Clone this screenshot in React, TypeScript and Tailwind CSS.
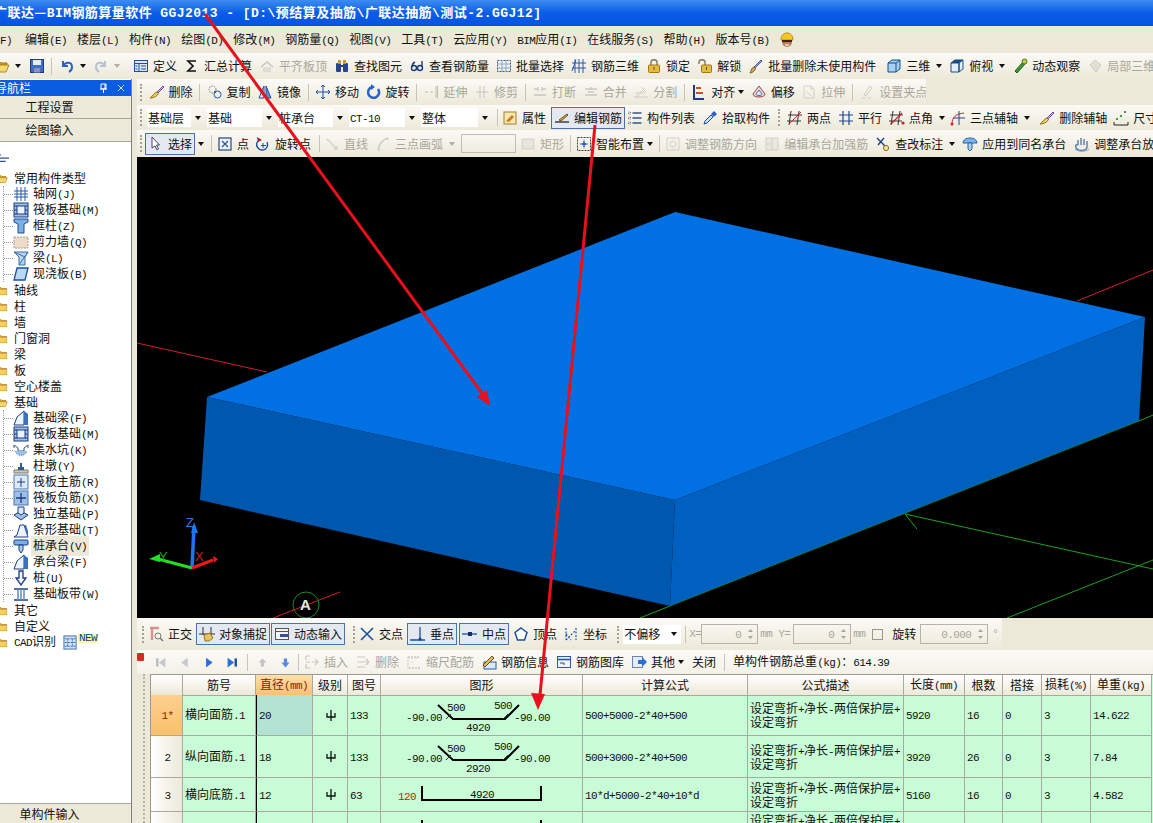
import type { ReactNode } from "react";
import clsx from "clsx";

const latin = "font-['Liberation_Mono',monospace] text-[11px] tracking-[-0.6px]";

// latin runs are narrower than the cjk font's own, so split them out
function T({ s }: { s: string }) {
  const parts = s.split(/([\x00-\x7f]+)/).filter(Boolean);
  return (
    <span className="whitespace-nowrap">
      {parts.map((p, i) =>
        /^[\x00-\x7f]/.test(p) ? (
          <span key={i} className={latin}>
            {p}
          </span>
        ) : (
          <span key={i}>{p}</span>
        )
      )}
    </span>
  );
}

const b = "#2a5aa8";
const icons: Record<string, ReactNode> = {
  folder: (<><path d="M1 4h5l1 1h7v9H1z" fill="#d9a520" stroke="#9a7410" /><path d="M1 7h13v7H1z" fill="#f4cf62" /></>),
  folderOpen: (<><path d="M1 4h5l1 1h6v2H4l-3 7z" fill="#d9a520" stroke="#9a7410" /><path d="M4 7h11l-3 7H1z" fill="#f6d870" stroke="#b08a20" /></>),
  save: (<><rect x="1.5" y="1.5" width="13" height="13" fill="#3f6fc0" stroke="#1c3c80" /><rect x="4" y="2" width="8" height="5" fill="#e4ecfa" /><rect x="5" y="10" width="6" height="4.5" fill="#8a93b8" /></>),
  undo: (<><path d="M4 3v5h5" stroke="#2a62c8" strokeWidth="2" /><path d="M4 8c3-5 9-4 9 1 0 2-1 4-3 5" stroke="#2a62c8" strokeWidth="2" /></>),
  redo: (<><path d="M12 3v5H7" stroke="#b8c4d4" strokeWidth="2" /><path d="M12 8C9 3 3 4 3 9c0 2 1 4 3 5" stroke="#b8c4d4" strokeWidth="2" /></>),
  define: (<><rect x="1.5" y="2.5" width="13" height="11" fill="#dbe8f8" stroke="#1d4f9c" /><path d="M1.5 5.5h13M6 5.5v8M8 8h5M8 11h5M2.5 8h2M2.5 11h2" stroke="#1d4f9c" /></>),
  sigma: <path d="M12 3H4l5 5-5 5h8" stroke="#111" strokeWidth="1.7" />,
  flat: (<><path d="M2 9l6-5 6 5" stroke="#b5b5ad" strokeWidth="1.5" /><path d="M4 9h8v5H4z" fill="#d8d8d0" /></>),
  binoc: (<><rect x="2" y="5" width="5" height="9" rx="1" fill="#25468c" /><rect x="9" y="5" width="5" height="9" rx="1" fill="#25468c" /><rect x="4" y="2" width="3" height="4" fill="#c99a28" /><rect x="9" y="2" width="3" height="4" fill="#c99a28" /><path d="M7 8h2" stroke="#25468c" strokeWidth="2" /></>),
  look: (<><circle cx="5" cy="10" r="2.5" stroke="#1c3c80" strokeWidth="1.4" /><circle cx="11" cy="10" r="2.5" stroke="#1c3c80" strokeWidth="1.4" /><path d="M3 9c0-3 1-4 3-5M13 9V3" stroke="#1c3c80" strokeWidth="1.4" /></>),
  batch: (<><path d="M1.5 2.5h13v11h-13z" strokeDasharray="2 1" stroke="#33558c" /><path d="M6 2v12M10 2v12M2 6h12M2 10h12" stroke="#8aa6cc" /></>),
  rebar3d: <path d="M1 5h14M1 10h14M4 1v14M8 1v14M12 1v14M1 13l4-11" stroke={b} />,
  lock: (<><path d="M5 7V4c0-3 6-3 6 0v3" stroke="#807860" strokeWidth="1.4" /><rect x="2.5" y="7" width="11" height="7.5" rx="1" fill="#e6b944" stroke="#a07810" /><path d="M8 9v3" stroke="#6a4f08" /></>),
  unlock: (<><path d="M2 6V4c0-3 6-3 6 0v3" stroke="#807860" strokeWidth="1.4" /><rect x="4.5" y="7" width="10" height="7.5" rx="1" fill="#e6b944" stroke="#a07810" /><path d="M9.5 9v3" stroke="#6a4f08" /></>),
  brush: (<><path d="M6 9l7-7 1 1-7 7z" fill="#9aa6e0" stroke="#5058a0" /><path d="M6 9l1.5 1.5C7 13 4 15 2 15c1-1 1-5 4-6z" fill="#d0a860" stroke="#806020" /></>),
  cube: (<><path d="M2 5l4-3h8v9l-4 3H2z" fill="#a9cff0" stroke="#13508c" /><path d="M2 5h8v9M10 5l4-3" stroke="#13508c" /></>),
  cubeTop: (<><path d="M2 5l4-3h8L10 5H2z" fill="#1f4f8a" stroke="#13406c" /><path d="M2 5h8v9H2zM10 5l4-3v9l-4 3z" fill="#e4eef8" stroke="#13508c" /></>),
  orbit: (<><path d="M3 13l8-9 2 2-8 9z" fill="#3c9a30" stroke="#1d5a18" /><circle cx="12.5" cy="3.5" r="2.5" fill="#b4d048" stroke="#587018" /></>),
  partial: <path d="M3 7l5-5 6 5-5 7z" fill="#d8d8d0" stroke="#c0c0b8" />,
  erase: (<><path d="M8 8l6-6 1 1-6 6z" fill="#d8b8e8" stroke="#7050a0" /><path d="M8 8l1.5 1.5C8 13 3 14 1 14c2-1 4-5 7-6z" fill="#f0d060" stroke="#907010" /></>),
  copy: (<><circle cx="5.5" cy="5.5" r="3.5" strokeDasharray="1.5 1" stroke="#777" /><circle cx="10.5" cy="10.5" r="3.5" stroke="#1d5fa8" /><path d="M7 7l2 2" stroke="#1d5fa8" /></>),
  mirror: (<><path d="M7 2L2 14h5z" fill="#dbe8f8" stroke="#1d4f9c" /><path d="M9 2l5 12H9z" fill="#5f94d0" stroke="#1d4f9c" /></>),
  move: <path d="M8 1v14M1 8h14M6 3l2-2 2 2M6 13l2 2 2-2M3 6L1 8l2 2M13 6l2 2-2 2" stroke="#1d4f9c" />,
  rotate: (<><path d="M12 5a5.5 5.5 0 1 1-6-2" stroke="#2a62c8" strokeWidth="2.6" /><path d="M5 0v6l4-3z" fill="#2a62c8" /></>),
  extend: <path d="M1 8h3M6 8h3M12 2v12M13.5 2v12" stroke="#a8a8a0" />,
  trim: <path d="M2 8h12M6 2v12M10 2v12" stroke="#b4b4ac" />,
  cut: <path d="M2 5h4M10 5h4M2 11h12M6 3v4M10 3v4" stroke="#b8b8b0" strokeWidth="1.4" />,
  merge: <path d="M2 5h12M2 11h12M5 8h6M8 3v3" stroke="#b8b8b0" strokeWidth="1.4" />,
  split: <path d="M1 13h14M3 13l9-9M8 3l5 5M2 9h10" stroke="#c0c0b8" />,
  align: (<><path d="M3 1v14h10" stroke="#1d3d80" strokeWidth="2" /><path d="M5 4h5M5 9h7" stroke="#c85020" strokeWidth="2" /></>),
  offset: (<><path d="M8 2l6 8c0 4-12 4-12 0z" fill="#f0d8d8" stroke="#a04050" /><path d="M8 6l3 4c0 2-6 2-6 0z" fill="#dde8f4" stroke="#5070a0" /></>),
  stretch: <path d="M3 2h7l3 3v9H3zM10 2v3h3M6 8l4 4" stroke="#c4c4bc" />,
  grip: <path d="M3 14h3M9 14h3M5 11l6-9 2 2-6 8z" stroke="#c0c0b8" />,
  attr: (<><rect x="2" y="2" width="12" height="12" fill="#f6e8b0" stroke="#a08030" /><path d="M4 11l6-6 2 2-5 5z" fill="#d07820" /></>),
  edit: (<><path d="M1 12h14" stroke="#222" strokeWidth="1.3" /><path d="M5 10l8-6 1 1-7 6z" fill="#e0b040" stroke="#705010" /></>),
  list: (<><path d="M5.5 3h9M5.5 8h9M5.5 13h9" stroke="#33558c" strokeWidth="1.5" /><path d="M1.5 2h2v2h-2zM1.5 7h2v2h-2zM1.5 12h2v2h-2z" stroke="#707070" strokeDasharray="1 1" /></>),
  pick: (<><path d="M2 14l1-3 6-6 2 2-6 6z" fill="#cfe0f4" stroke="#1d4f9c" /><path d="M9 4l3-3 3 3-3 3z" fill="#2a62c8" /></>),
  two: (<><path d="M4 1l-2 14M12 1l-2 14M1 5h14M0 11h14" stroke="#333" /><path d="M2 14L14 2" stroke="#c03020" /></>),
  parallel: <path d="M5 1v14M11 1v14M1 5h14M1 11h14" stroke="#20488c" strokeWidth="1.2" />,
  angle: (<><path d="M4 1l-2 14M11 1L9 15M1 5h13M0 11h13" stroke="#333" /><path d="M2 14L13 3" stroke="#d02030" strokeWidth="1.3" /><circle cx="14" cy="13" r="1.6" fill="#d02030" /></>),
  arcAxis: (<><path d="M2 14C2 7 6 4 14 3" stroke="#d02030" /><path d="M9 1v14M3 8h12" stroke="#20488c" /><circle cx="2" cy="14" r="1.5" fill="#d02030" /></>),
  dim: (<><path d="M1 15h14M1 12v3M15 12v3" stroke="#222" /><path d="M3 9h2M7 6h2M11 2h2" stroke="#40a040" strokeWidth="2" /></>),
  cursor: <path d="M4 1v11l3-2 2 4 1.5-1-2-4h3z" fill="#fff" stroke="#446" />,
  point: (<><rect x="2" y="2" width="12" height="12" fill="#eef2fa" stroke="#33558c" strokeWidth="1.3" /><path d="M5 5l6 6M11 5l-6 6" stroke="#33558c" strokeWidth="1.3" /></>),
  rotPoint: (<><path d="M12 6a5.5 5.5 0 1 1-8-2" stroke="#1d4f9c" strokeWidth="1.4" /><path d="M2 1l1 5 4-2z" fill="#a02030" /><path d="M8 7v5M6 9.5h5" stroke="#1d4f9c" /></>),
  line: <path d="M3 3l10 10M13 13h-3M13 13v-3" stroke="#c0c0b8" strokeWidth="1.3" />,
  arc3: <path d="M3 14C4 8 8 3 13 2M3 14h2M13 2v2" stroke="#c0c0b8" strokeWidth="1.6" />,
  rect: <rect x="2" y="3" width="12" height="10" fill="#e0e0d8" stroke="#c8c8c0" />,
  smart: (<><rect x="1.5" y="1.5" width="13" height="13" strokeDasharray="2 1" stroke="#444" /><path d="M8 3l1 4 4 1-4 1-1 4-1-4-4-1 4-1z" fill="#2a62c8" /></>),
  adjDir: (<><rect x="2" y="2" width="12" height="12" stroke="#c4c4bc" /><circle cx="8" cy="8" r="3" stroke="#c4c4bc" /></>),
  editCap: (<><rect x="2" y="2" width="12" height="12" fill="#e4e4dc" stroke="#c4c4bc" /><path d="M8 2v12M2 8h6" stroke="#c4c4bc" /></>),
  label: (<><path d="M2 2l10 10M9 2L3 9" stroke="#1d3d80" strokeWidth="1.4" /><circle cx="11" cy="12" r="2.6" fill="#f0e0a0" stroke="#907020" /></>),
  apply: (<><path d="M1 7c0-3 3-5 7-5s7 2 7 5z" fill="#7ab4ea" stroke="#2a62a8" /><path d="M6 7h4v6l-2 2-2-2z" fill="#a9cff0" stroke="#2a62a8" /></>),
  hand: (<><path d="M4 9V4M7 9V2M10 9V3M13 9V5M4 9c-3-1-3 2-1 4 2 2 8 2 10-1V8" stroke="#5070a0" strokeWidth="1.3" /><path d="M1 13c3 3 11 3 14 0" stroke="#7aa0d8" /></>),
  ortho: (<><path d="M2 2h9M4 2v12" stroke="#d89090" strokeWidth="2.4" /><circle cx="10" cy="10" r="3" stroke="#777" /><path d="M12 12l3 3" stroke="#777" strokeWidth="1.4" /></>),
  snap: (<><path d="M4 1v8M12 1v8M0 8h16" stroke="#333" /><path d="M5 9l6-2 3 5-4 3H6z" fill="#e8c460" stroke="#987810" /></>),
  input: (<><rect x="1.5" y="2.5" width="13" height="11" fill="#f4f4f0" stroke="#555" /><path d="M2 5.5h12" stroke="#555" /><path d="M6 9.5h8" stroke="#33558c" strokeWidth="3" /></>),
  cross: <path d="M2 2l12 12M14 2L2 14" stroke="#1d4f9c" strokeWidth="1.6" />,
  perp: (<><path d="M0 14h15M10 1v13" stroke="#1d4f9c" strokeWidth="1.3" /><circle cx="10" cy="13" r="1.5" fill="#1d3d80" /></>),
  mid: (<><path d="M0 8h15" stroke="#1d4f9c" strokeWidth="1.3" /><rect x="6" y="6" width="4" height="4" fill="#14306c" /></>),
  vertex: <path d="M8 2l6 4.5-2.5 7.5h-7L2 6.5z" fill="#fff" stroke="#1d4f9c" strokeWidth="1.5" />,
  coord: <path d="M3 2v12M13 2v12M3 14l10-10M3 8l5 6" stroke="#2a62a8" strokeDasharray="2 1.5" strokeWidth="1.3" />,
  first: (<><path d="M4 3v10" stroke="#b8bcc4" strokeWidth="3" /><path d="M14 2v12L6 8z" fill="#c4c8d0" /></>),
  prev: <path d="M12 2v12L4 8z" fill="#c4c8d0" />,
  next: <path d="M5 2v12l8-6z" fill="#2a70d0" />,
  last: (<><path d="M2 2v12l8-6z" fill="#2a70d0" /><path d="M12 3v10" stroke="#1d4f9c" strokeWidth="3" /></>),
  up: <path d="M8 3l5 5h-3v5H6V8H3z" fill="#c0c4cc" />,
  down: <path d="M8 14l5-6h-3V3H6v5H3z" fill="#5a8ae0" />,
  insert: <path d="M2 2h4M2 14h4M2 8h4M2 2v4M2 10v4M8 8h6M11 5l3 3-3 3" stroke="#b8b8b0" strokeWidth="1.2" />,
  remove: <path d="M2 3h8M2 8h6M2 13h8M8 8h6M11 5l3 3-3 3" stroke="#b8b8b0" strokeWidth="1.2" />,
  scale: <path d="M2 3v11h12M6 3v2M6 8v1M10 3v2M2 3h11" stroke="#bcbcb4" strokeDasharray="2 1" strokeWidth="1.3" />,
  info: (<><rect x="3" y="8" width="12" height="7" fill="#dbe8f8" stroke="#2a5aa8" /><path d="M2 11l9-9 2 2-9 9z" fill="#e0b868" stroke="#705010" /></>),
  lib: (<><rect x="1.5" y="2.5" width="13" height="11" fill="#eef3fb" stroke="#2a5aa8" /><path d="M1.5 5.5h13" stroke="#2a5aa8" strokeWidth="1.6" /><path d="M4 9h4v2" stroke="#444" /></>),
  other: (<><rect x="1.5" y="2.5" width="10" height="11" fill="#e4ecf8" stroke="#6a86b0" /><path d="M7 6h4V3l5 5-5 5v-3H7z" fill="#2a70d0" /></>),
  grid: <path d="M1 5h14M1 8h14M1 11h14M4 1v14M8 1v14M12 1v14" stroke={b} />,
  raft: (<><rect x="1" y="1" width="14" height="14" fill="#9cc0e8" stroke="#1d3d80" /><rect x="4" y="4" width="8" height="8" fill="#eaf2fc" stroke="#1d3d80" /><path d="M1 4h3M1 8h3M1 12h3M12 4h3M12 8h3M12 12h3" stroke="#1d3d80" /></>),
  col: <path d="M1 1h14v3l-4 2v9H5V6L1 4z" fill="#7ab0e4" stroke="#1d4f9c" />,
  wall: <rect x="1" y="3" width="14" height="11" fill="#eedcc8" stroke="#a9a090" strokeDasharray="2 1" />,
  beam: <path d="M1 2h14l-3 5v8H6V7zM1 2l11 5M15 2L6 15" fill="#b8d4ee" stroke="#3a70a8" />,
  slab: <path d="M4 2h11l-3 12H1z" fill="#b8d8f6" stroke="#1d4f9c" strokeWidth="1.3" />,
  fbeam: (<><path d="M1 15l3-8 7-6v14z" fill="#eef3fb" stroke="#1d3d80" /><path d="M11 1l4 3v11h-4z" fill="#3a70c0" /></>),
  pit: (<><path d="M1 3l4 3v3h6V6l4-3M1 3v3M15 3v3" stroke="#33558c" /><path d="M2 9c2 6 10 6 12 0" fill="#9cc0e8" stroke="#6a90c0" strokeDasharray="1 1" /></>),
  pier: (<><path d="M1 12h14v3H1z" fill="#c8c8c0" stroke="#807868" /><path d="M5 9h6v3H5zM7 5h2v4H7z" fill="#2a5aa8" /></>),
  main: (<><rect x="1" y="1" width="14" height="14" fill="#dceaf8" stroke="#4a78b0" /><path d="M8 4v9M4 8h8" stroke="#1d3d80" /></>),
  neg: (<><rect x="1" y="1" width="14" height="14" fill="#9cc0e8" stroke="#4a78b0" /><path d="M8 3v10M3 8h10" stroke="#1d3d80" strokeWidth="1.3" /></>),
  iso: (<><path d="M1 9l7-4 7 4-7 5z" fill="#9cc0e8" stroke="#1d3d80" /><path d="M5 7V1h6v6l-3 2z" fill="#dceaf8" stroke="#1d3d80" /></>),
  strip: (<><path d="M1 15l3-2 3-10h4l4 12z" fill="#eef3fb" stroke="#1d3d80" /><path d="M11 3l2 0 2 6v6z" fill="#3a70c0" /></>),
  cap: (<><rect x="1" y="2" width="14" height="5" rx="1" fill="#7ab0e4" stroke="#1d3d80" /><path d="M6 7h4v5l-2 3-2-3z" fill="#a9cff0" stroke="#1d3d80" /></>),
  pile: <path d="M6 1h4v7h3l-5 7-5-7h3z" fill="#eef3fb" stroke="#1d3d80" strokeWidth="1.3" />,
  band: (<><path d="M1 3h14M1 14h14" stroke="#1d3d80" strokeWidth="1.5" /><path d="M5 3v11M8 3v11M11 3v11" stroke="#5f8cc4" strokeWidth="1.5" /></>),
  cad: (<><rect x="1" y="1" width="13" height="14" fill="#cfe0f4" stroke="#3a70a8" /><path d="M5 4v9M10 4v9M2 4h11M2 8h11M2 12h11" stroke="#3a70a8" strokeDasharray="2 1" /></>),
  avatar: (<><circle cx="8" cy="10" r="5" fill="#b88058" /><path d="M2 8C2 3 5 1 8 1s6 2 6 7z" fill="#f4c820" stroke="#c09010" /><path d="M3 9h10" stroke="#402010" strokeWidth="2" /><path d="M6 13h4" stroke="#f0e0d0" strokeWidth="1.5" /></>),
  rootTree: <path d="M0 6h6M0 10h16M4 14h8" stroke="#33558c" strokeWidth="1.5" />,
};

function Icon({ n, size = 16, off, cls }: { n: string; size?: number; off?: boolean; cls?: string }) {
  return (
    <svg width={size} height={size} viewBox="0 0 16 16" fill="none" className={clsx("shrink-0", off && "opacity-70", cls)}>
      {icons[n]}
    </svg>
  );
}

function Caret({ off, cls }: { off?: boolean; cls?: string }) {
  return (
    <svg width="6" height="4" viewBox="0 0 6 4" className={clsx("shrink-0", cls)}>
      <path d="M0 0h6L3 4z" fill={off ? "#b0b0a8" : "#111"} />
    </svg>
  );
}

type ToolProps = { ic: string; t: string; off?: boolean; drop?: boolean; near?: boolean; on?: boolean; cls?: string };

function Tool({ ic, t, off, drop, near, on, cls }: ToolProps) {
  return (
    <div
      className={clsx(
        "flex items-center gap-1 shrink-0 h-[22px]",
        off && "text-[#a9a79b]",
        on && "bg-[#e4e8f0] border border-[#4a72ac] px-[2px]",
        cls
      )}
    >
      <Icon n={ic} off={off} />
      <T s={t} />
      {drop && <Caret off={off} cls={near ? "ml-[-1px]" : "ml-[2px]"} />}
    </div>
  );
}

function Sep({ cls }: { cls?: string }) {
  return <div className={clsx("w-px h-[17px] bg-[#c8c5b6] shrink-0", cls)} />;
}

function Grip({ cls }: { cls?: string }) {
  return <div className={clsx("w-[2px] h-[17px] border-l-2 border-dotted border-[#a5a294] shrink-0", cls)} />;
}

function Band({ children, cls }: { children: ReactNode; cls?: string }) {
  return (
    <div className={clsx("flex items-center bg-gradient-to-b from-[#fbfaf6] to-[#ece9d8] h-full overflow-hidden", cls)}>
      {children}
    </div>
  );
}

function Combo({ t, w }: { t: string; w: string }) {
  return (
    <div className={clsx("flex items-center shrink-0 h-[19px]", w)}>
      <div className="flex-1 bg-white h-full flex items-center pl-[1px]">
        <T s={t} />
      </div>
      <div className="w-[14px] flex justify-center">
        <Caret />
      </div>
    </div>
  );
}

function NumBox({ v, cls }: { v: string; cls: string }) {
  return (
    <div className={clsx("h-[20px] border border-[#b5b3a6] flex items-center justify-end text-[#a9a79b] shrink-0 pr-[3px] gap-[6px]", cls)}>
      <T s={v} />
      <svg width="7" height="14" viewBox="0 0 7 14">
        <path d="M3.5 2L6 5H1zM3.5 12L6 9H1z" fill="#a9a79b" />
      </svg>
    </div>
  );
}

const menu = ["编辑(E)", "楼层(L)", "构件(N)", "绘图(D)", "修改(M)", "钢筋量(Q)", "视图(V)", "工具(T)", "云应用(Y)", "BIM应用(I)", "在线服务(S)", "帮助(H)", "版本号(B)"];

const commonItems = [
  ["grid", "轴网(J)"], ["raft", "筏板基础(M)"], ["col", "框柱(Z)"], ["wall", "剪力墙(Q)"], ["beam", "梁(L)"], ["slab", "现浇板(B)"],
];
const baseItems = [
  ["fbeam", "基础梁(F)"], ["raft", "筏板基础(M)"], ["pit", "集水坑(K)"], ["pier", "柱墩(Y)"], ["main", "筏板主筋(R)"], ["neg", "筏板负筋(X)"],
  ["iso", "独立基础(P)"], ["strip", "条形基础(T)"], ["cap", "桩承台(V)"], ["fbeam", "承台梁(F)"], ["pile", "桩(U)"], ["band", "基础板带(W)"],
];

function Folder({ t, open }: { t: string; open?: boolean }) {
  return (
    <div className="flex items-center h-4 gap-[6px]">
      <span className="-ml-[3px]">
        <Icon n={open ? "folderOpen" : "folder"} size={11} />
      </span>
      <T s={t} />
    </div>
  );
}

function Children({ items }: { items: string[][] }) {
  return (
    <div className="ml-[3px] border-l border-dotted border-[#9a9a9a]">
      {items.map(([ic, t]) => (
        <div key={t} className="flex items-center h-4">
          <div className="w-[9px] border-t border-dotted border-[#9a9a9a] shrink-0" />
          <Icon n={ic} />
          <span className={clsx("ml-[2px] px-[2px]", t === "桩承台(V)" && "bg-[#ece9d8]")}>
            <T s={t} />
          </span>
        </div>
      ))}
    </div>
  );
}

function Shape({ len }: { len: string }) {
  return (
    <svg width="200" height="40" viewBox="0 0 200 40" className="shrink-0">
      <path d="M57 10l15 14h52l14-14" fill="none" stroke="#000" strokeWidth="2" />
      <path d="M65 24l5-5M122 24l5-5" fill="none" stroke="#333" />
      <g fontSize="11" letterSpacing="-0.6" fill="#111" className="font-['Liberation_Mono',monospace]">
        <text x="25" y="26">-90.00</text>
        <text x="133" y="26">-90.00</text>
        <text x="66" y="16">500</text>
        <text x="113" y="14">500</text>
        <text x="85" y="36">{len}</text>
      </g>
    </svg>
  );
}

function RectShape() {
  return (
    <svg width="200" height="34" viewBox="0 0 200 34" className="shrink-0">
      <path d="M41 8v14h119V8" fill="none" stroke="#000" strokeWidth="2" />
      <g fontSize="11" letterSpacing="-0.6" className="font-['Liberation_Mono',monospace]">
        <text x="17" y="22" fill="#c01818">120</text>
        <text x="89" y="20" fill="#111">4920</text>
      </g>
    </svg>
  );
}

const colsClass = "grid grid-cols-[32px_73px_57px_35px_33px_202px_165px_156px_61px_38px_39px_49px_61px]";
const heads = ["", "筋号", "直径(mm)", "级别", "图号", "图形", "计算公式", "公式描述", "长度(mm)", "根数", "搭接", "损耗(%)", "单重(kg)"];

const rows = [
  { no: "1*", name: "横向面筋.1", d: "20", fig: "133", shape: <Shape len="4920" />, f: "500+5000-2*40+500", len: "5920", n: "16", w: "14.622", h: "h-[41px]" },
  { no: "2", name: "纵向面筋.1", d: "18", fig: "133", shape: <Shape len="2920" />, f: "500+3000-2*40+500", len: "3920", n: "26", w: "7.84", h: "h-[42px]" },
  { no: "3", name: "横向底筋.1", d: "12", fig: "63", shape: <RectShape />, f: "10*d+5000-2*40+10*d", len: "5160", n: "16", w: "4.582", h: "h-[34px]" },
];

const cell = "border-r border-b border-[#a9a9a0] flex items-center pl-[2px] overflow-hidden";

function Desc() {
  return (
    <div className="leading-[12px] text-[12px]">
      <T s="设定弯折+净长-两倍保护层+" />
      <br />
      <T s="设定弯折" />
    </div>
  );
}

export default function App() {
  return (
    <div className="relative w-[1153px] h-[823px] overflow-hidden flex flex-col bg-[#ece9d8] text-[12px] text-[#111] font-['Noto_Sans_CJK_SC',sans-serif]">
      {/* title bar */}
      <div className="h-[26px] shrink-0 flex items-center bg-gradient-to-b from-[#3c8cf0] via-[#0a5ce8] to-[#0654e0] text-white font-bold text-[13px] tracking-[0.45px] font-['Liberation_Mono','Noto_Sans_CJK_SC',monospace] whitespace-nowrap">
        <span className="-ml-[6px]">
          广联达<span className="font-['Noto_Sans_CJK_SC',sans-serif]">—</span>BIM钢筋算量软件 GGJ2013 - [D:\预结算及抽筋\广联达抽筋\测试-2.GGJ12]
        </span>
      </div>

      {/* menu */}
      <div className="h-[27px] shrink-0 flex items-center gap-[10px] bg-[#ece9d8]">
        <span className="-ml-[30px] mr-[3px]">
          <T s="文件(F)" />
        </span>
        {menu.map((m) => (
          <T key={m} s={m} />
        ))}
        <Icon n="avatar" />
      </div>

      {/* main toolbar */}
      <div className="h-[26px] shrink-0 flex items-center">
        <Band cls="w-[127px] gap-[5px]">
          <Icon n="folderOpen" cls="-ml-[6px]" />
          <Caret />
          <Icon n="save" cls="ml-[3px]" />
          <Sep cls="ml-[1px]" />
          <Icon n="undo" cls="ml-[2px]" />
          <Caret />
          <Icon n="redo" cls="ml-[2px]" />
          <Caret off />
        </Band>
        <Band cls="flex-1 gap-[7px] pl-[6px]">
          <Tool ic="define" t="定义" />
          <Tool ic="sigma" t="汇总计算" />
          <Tool ic="flat" t="平齐板顶" off />
          <Tool ic="binoc" t="查找图元" />
          <Tool ic="look" t="查看钢筋量" />
          <Tool ic="batch" t="批量选择" />
          <Tool ic="rebar3d" t="钢筋三维" />
          <Tool ic="lock" t="锁定" />
          <Tool ic="unlock" t="解锁" />
          <Tool ic="brush" t="批量删除未使用构件" />
          <Tool ic="cube" t="三维" drop cls="ml-[3px]" />
          <Tool ic="cubeTop" t="俯视" drop />
          <Tool ic="orbit" t="动态观察" />
          <Tool ic="partial" t="局部三维" off />
        </Band>
      </div>

      <div className="flex-1 flex min-h-0">
        {/* navigation panel */}
        <div className="w-[132px] shrink-0 flex flex-col border-r border-[#808080] bg-white">
          <div className="h-[16px] mt-[1px] bg-[#0a5ce0] text-white flex items-center justify-between overflow-hidden">
            <span className="-ml-[5px]">导航栏</span>
            <div className="flex items-center gap-[9px] pr-[6px] text-[11px]">
              <svg width="9" height="11" viewBox="0 0 9 11">
                <path d="M2 1h5v5H2zM1 6h7M4.5 6v4M6 1v5" fill="none" stroke="#fff" />
              </svg>
              <svg width="8" height="8" viewBox="0 0 8 8">
                <path d="M1 1l6 6M7 1L1 7" stroke="#cfe0ff" />
              </svg>
            </div>
          </div>
          <div className="h-[23px] bg-[#ece9d8] border-b border-[#a9a79b] flex items-center justify-center pr-[32px]">工程设置</div>
          <div className="h-[23px] bg-[#ece9d8] border-b border-[#a9a79b] flex items-center justify-center pr-[32px]">绘图输入</div>
          <div className="flex-1 min-h-0 overflow-hidden">
            <div className="h-[28px] flex items-center -ml-[4px]">
              <Icon n="rootTree" size={13} />
            </div>
            <Folder t="常用构件类型" open />
            <Children items={commonItems} />
            {["轴线", "柱", "墙", "门窗洞", "梁", "板", "空心楼盖"].map((f) => (
              <Folder key={f} t={f} />
            ))}
            <Folder t="基础" open />
            <Children items={baseItems} />
            <Folder t="其它" />
            <Folder t="自定义" />
            <div className="flex items-center h-4 gap-[6px]">
              <span className="-ml-[3px]"><Icon n="folder" size={11} /></span>
              <T s="CAD识别" />
              <span className="ml-[1px]"><Icon n="cad" size={15} /></span>
              <span className={clsx(latin, "-mt-[7px] -ml-[6px] bg-[#fff8a0] text-[#0b3a8c] text-[9px] leading-[9px] px-[1px]")}>NEW</span>
            </div>
          </div>
          <div className="h-[20px] bg-[#ece9d8] border-t border-[#a9a79b] flex items-center justify-center pr-[32px]">单构件输入</div>
        </div>

        <div className="w-[5px] shrink-0" />

        {/* editor */}
        <div className="flex-1 min-w-0 flex flex-col">
          <div className="h-[26px] shrink-0">
            <Band cls="w-[789px] gap-[6.5px] pl-[3px]">
              <Grip />
              <Tool ic="erase" t="删除" />
              <Sep />
              <Tool ic="copy" t="复制" />
              <Tool ic="mirror" t="镜像" />
              <Sep />
              <Tool ic="move" t="移动" />
              <Tool ic="rotate" t="旋转" />
              <Sep />
              <Tool ic="extend" t="延伸" off />
              <Tool ic="trim" t="修剪" off />
              <Sep />
              <Tool ic="cut" t="打断" off />
              <Tool ic="merge" t="合并" off />
              <Tool ic="split" t="分割" off />
              <Sep />
              <Tool ic="align" t="对齐" drop near />
              <Tool ic="offset" t="偏移" />
              <Tool ic="stretch" t="拉伸" off />
              <Sep />
              <Tool ic="grip" t="设置夹点" off />
            </Band>
          </div>

          <div className="h-[25px] shrink-0">
            <Band cls="gap-[2px] pl-[3px]">
              <Grip cls="mr-[3px]" />
              <Combo t="基础层" w="w-[58px]" />
              <Combo t="基础" w="w-[69px]" />
              <Combo t="桩承台" w="w-[69px]" />
              <Combo t="CT-10" w="w-[70px]" />
              <Combo t="整体" w="w-[71px]" />
              <Sep cls="ml-[3px]" />
              <Tool ic="attr" t="属性" cls="ml-[2px]" />
              <Tool ic="edit" t="编辑钢筋" on cls="ml-[3px]" />
              <Tool ic="list" t="构件列表" />
              <Tool ic="pick" t="拾取构件" cls="ml-[5px]" />
              <Grip cls="ml-[6px]" />
              <Tool ic="two" t="两点" cls="ml-[5px]" />
              <Tool ic="parallel" t="平行" cls="ml-[5px]" />
              <Tool ic="angle" t="点角" drop cls="ml-[5px]" />
              <Tool ic="arcAxis" t="三点辅轴" drop cls="ml-[3px]" />
              <Tool ic="erase" t="删除辅轴" cls="ml-[7px]" />
              <Tool ic="dim" t="尺寸" cls="ml-[4px]" />
            </Band>
          </div>

          <div className="h-[27px] shrink-0">
            <Band cls="gap-[6px] pl-[3px]">
              <Grip />
              <Tool ic="cursor" t="选择" on cls="-ml-[3px]" />
              <Caret cls="-ml-[3px]" />
              <Sep cls="ml-[1px]" />
              <Tool ic="point" t="点" cls="-ml-[1px]" />
              <Tool ic="rotPoint" t="旋转点" />
              <Sep cls="ml-[2px]" />
              <Tool ic="line" t="直线" off cls="-ml-[2px]" />
              <Tool ic="arc3" t="三点画弧" off drop cls="ml-[1px]" />
              <div className="w-[55px] h-[19px] border border-[#c0beb0] shrink-0" />
              <Tool ic="rect" t="矩形" off cls="-ml-[2px]" />
              <Sep />
              <Tool ic="smart" t="智能布置" drop near cls="-ml-[1px]" />
              <Sep />
              <Tool ic="adjDir" t="调整钢筋方向" off cls="-ml-[1px]" />
              <Tool ic="editCap" t="编辑承台加强筋" off cls="ml-[1px]" />
              <Tool ic="label" t="查改标注" drop cls="ml-[1px]" />
              <Tool ic="apply" t="应用到同名承台" cls="ml-[1px]" />
              <Tool ic="hand" t="调整承台放" cls="ml-[2px]" />
            </Band>
          </div>

          {/* 3d viewport */}
          <div className="h-[461px] shrink-0 bg-black">
            <svg width="1016" height="461" viewBox="137 157 1016 461" className="block">
              <path d="M137 343l130 29M1153 270l-76 31M273 618l67-26" stroke="#d0202c" fill="none" />
              <path d="M905 514l248 55M905 514l12 15M1007 618l146-58M640 618l30-12M1139 421l14-6" stroke="#1ea01e" fill="none" />
              <path d="M207 397L675 212l470 105-470 183z" fill="#0070e2" />
              <path d="M207 397l468 103-5 106-470-106z" fill="#0058ae" />
              <path d="M675 500l470-183-6 104-469 185z" fill="#0060bf" />
              <path d="M670 606l469-185" stroke="#1ea01e" strokeWidth="0.6" fill="none" />
              {/* axis gizmo */}
              <path d="M192 568l2-42" stroke="#1878f0" strokeWidth="3.5" />
              <path d="M194 522l-3 11h7z" fill="#1878f0" />
              <path d="M192 568l-34-9" stroke="#20e020" strokeWidth="3" />
              <path d="M149 559l11-5v8z" fill="#20e020" />
              <path d="M192 568l21-8" stroke="#f01818" strokeWidth="3" />
              <path d="M218 559l-5-3 1 7z" fill="#f01818" />
              <g fontFamily="Liberation Sans" fontSize="13">
                <text x="186" y="527" fill="#2a7ce0">Z</text>
                <text x="159" y="561" fill="#20a020">Y</text>
                <text x="195" y="561" fill="#c02020">X</text>
              </g>
              <circle cx="306" cy="605" r="13" stroke="#1c8a28" fill="none" />
              <text x="300" y="610" fill="#e8e8e8" fontFamily="Liberation Sans" fontWeight="bold" fontSize="15">A</text>
            </svg>
          </div>

          {/* snap toolbar */}
          <div className="h-[32px] shrink-0 flex items-center">
            <Band cls="w-[865px] gap-[4px] pl-[5px]">
              <Grip />
              <Tool ic="ortho" t="正交" />
              <Tool ic="snap" t="对象捕捉" on />
              <Tool ic="input" t="动态输入" on cls="-ml-[3px]" />
              <Grip cls="ml-[4px]" />
              <Tool ic="cross" t="交点" />
              <Tool ic="perp" t="垂点" on />
              <Tool ic="mid" t="中点" on cls="-ml-[2px]" />
              <Tool ic="vertex" t="顶点" />
              <Tool ic="coord" t="坐标" cls="ml-[2px]" />
              <Grip cls="ml-[6px]" />
              <div className="w-[58px] h-[19px] bg-white flex items-center justify-between pr-[4px] pl-[1px] shrink-0">
                不偏移
                <Caret />
              </div>
              <Sep />
              <span className={clsx(latin, "text-[#a9a79b] shrink-0 -ml-[1px]")}>X=</span>
              <NumBox v="0" cls="w-[57px] -ml-[4px]" />
              <span className={clsx(latin, "text-[#a9a79b] shrink-0 -ml-[2px]")}>mm</span>
              <span className={clsx(latin, "text-[#a9a79b] shrink-0 ml-[2px]")}>Y=</span>
              <NumBox v="0" cls="w-[58px] -ml-[1px]" />
              <span className={clsx(latin, "text-[#a9a79b] shrink-0 -ml-[2px]")}>mm</span>
              <div className="w-[11px] h-[11px] border border-[#9a988a] ml-[3px] shrink-0" />
              <span className="ml-[5px] shrink-0 whitespace-nowrap">旋转</span>
              <NumBox v="0.000" cls="w-[68px]" />
              <span className={clsx(latin, "text-[#a9a79b] shrink-0")}>°</span>
            </Band>
          </div>

          {/* rebar toolbar */}
          <div className="h-[24px] shrink-0 flex items-center gap-[8px] bg-gradient-to-b from-[#fbfaf6] to-[#f3f1e7] pl-[17px] relative">
            <div className="absolute left-0 top-[3px] w-[7px] h-[8px] bg-[#c83020] rounded-[1px]" />
            <Icon n="first" size={13} />
            <Icon n="prev" size={13} cls="ml-[3px]" />
            <Icon n="next" size={13} cls="ml-[3px]" />
            <Icon n="last" size={13} cls="ml-[3px]" />
            <Sep />
            <Icon n="up" size={13} />
            <Icon n="down" size={13} cls="ml-[2px]" />
            <Sep cls="-ml-[2px]" />
            <Tool ic="insert" t="插入" off cls="-ml-[3px]" />
            <Tool ic="remove" t="删除" off cls="-ml-[1px]" />
            <Tool ic="scale" t="缩尺配筋" off cls="-ml-[1px]" />
            <Tool ic="info" t="钢筋信息" cls="-ml-[1px]" />
            <Tool ic="lib" t="钢筋图库" cls="-ml-[1px]" />
            <Tool ic="other" t="其他" drop near cls="-ml-[1px]" />
            <span className="shrink-0">关闭</span>
            <Sep />
            <T s="单构件钢筋总重(kg)：614.39" />
          </div>

          {/* rebar table */}
          <div className="h-[149px] shrink-0 flex">
            <div className="w-[13px] shrink-0 relative">
              <div className="absolute left-[6px] top-0 bottom-0 border-l-2 border-dotted border-[#b5b3a6]" />
            </div>
            <div className="w-[1003px] bg-[#c8fcd6] border-t border-l border-[#9a9a92] overflow-hidden">
              <div className={clsx(colsClass, "h-[20px]")}>
                {heads.map((h, i) => (
                  <div
                    key={i}
                    className={clsx(
                      "border-r border-b border-[#a9a9a0] flex items-center justify-center",
                      i === 2 ? "bg-gradient-to-b from-[#fde0a8] to-[#f9c070] text-[#8a2020]" : "bg-gradient-to-b from-white to-[#ece9d8]"
                    )}
                  >
                    <T s={h} />
                  </div>
                ))}
              </div>
              {rows.map((r, i) => (
                <div key={r.no} className={clsx(colsClass, r.h)}>
                  <div className={clsx(cell, "justify-center", i === 0 ? "bg-gradient-to-b from-[#fdd08c] to-[#f9c070] text-[#8a2020]" : "bg-gradient-to-r from-white to-[#ece9d8]")}>
                    <T s={r.no} />
                  </div>
                  <div className={cell}><T s={r.name} /></div>
                  <div className={clsx(cell, "border-l border-l-black", i === 0 && "bg-[#b3e2d2]")}><T s={r.d} /></div>
                  <div className={clsx(cell, "justify-center")}>
                    <svg width="10" height="11" viewBox="0 0 10 11"><path d="M1 3v4h8V3M5 0v11" fill="none" stroke="#111" strokeWidth="1.3" /></svg>
                  </div>
                  <div className={cell}><T s={r.fig} /></div>
                  <div className="border-r border-b border-[#a9a9a0] overflow-hidden">{r.shape}</div>
                  <div className={cell}><T s={r.f} /></div>
                  <div className={cell}><Desc /></div>
                  <div className={cell}><T s={r.len} /></div>
                  <div className={cell}><T s={r.n} /></div>
                  <div className={cell}><T s="0" /></div>
                  <div className={cell}><T s="3" /></div>
                  <div className={cell}><T s={r.w} /></div>
                </div>
              ))}
              <div className={clsx(colsClass, "h-[34px]")}>
                <div className="border-r border-[#a9a9a0] bg-gradient-to-r from-white to-[#ece9d8]" />
                <div className="border-r border-[#a9a9a0]" />
                <div className="border-r border-[#a9a9a0] border-l border-l-black" />
                <div className="border-r border-[#a9a9a0]" />
                <div className="border-r border-[#a9a9a0]" />
                <div className="border-r border-[#a9a9a0]">
                  <svg width="200" height="12" viewBox="0 0 200 12" className="block">
                    <path d="M41 8V12M160 8V12" stroke="#000" strokeWidth="2" />
                  </svg>
                </div>
                <div className="border-r border-[#a9a9a0]" />
                <div className="border-r border-[#a9a9a0] pl-[2px] pt-[2px] leading-[11px]"><T s="设定弯折+净长-两倍保护层+" /></div>
                <div className="border-r border-[#a9a9a0]" />
                <div className="border-r border-[#a9a9a0]" />
                <div className="border-r border-[#a9a9a0]" />
                <div className="border-r border-[#a9a9a0]" />
                <div className="border-r border-[#a9a9a0]" />
              </div>
            </div>
          </div>
        </div>
      </div>

      {/* annotation arrows on top of the whole window */}
      <svg width="1153" height="823" viewBox="0 0 1153 823" className="absolute inset-0 pointer-events-none">
        <path d="M205 14L484 396" stroke="#e8101c" strokeWidth="3" />
        <path d="M490 406l-13-9 10-7z" fill="#e8101c" />
        <path d="M595 125L540 695" stroke="#e8101c" strokeWidth="3" />
        <path d="M538 710l-7-17 14 1z" fill="#e8101c" />
      </svg>
    </div>
  );
}
